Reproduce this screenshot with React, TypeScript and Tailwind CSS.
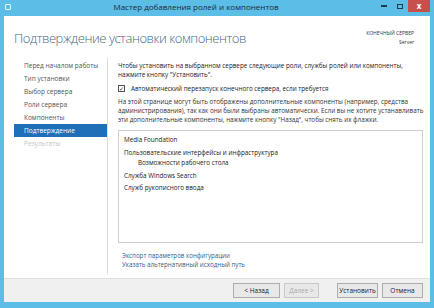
import React from "react";

const navItems = [
  { label: "Перед началом работы", state: "done" },
  { label: "Тип установки", state: "done" },
  { label: "Выбор сервера", state: "done" },
  { label: "Роли сервера", state: "done" },
  { label: "Компоненты", state: "done" },
  { label: "Подтверждение", state: "active" },
  { label: "Результаты", state: "disabled" },
];

function WinButton({ children, disabled }: { children: React.ReactNode; disabled?: boolean }) {
  return (
    <div
      className={
        "h-[15px] flex items-center justify-center border text-[6.5px] bg-[#e8e8e8] " +
        (disabled ? "border-[#c8c8c8] text-[#a8a8a8]" : "border-[#adadad] text-[#222]")
      }
    >
      {children}
    </div>
  );
}

export default function App() {
  return (
    <div
      className="w-[434px] h-[308px] bg-[#5cbde6] flex flex-col overflow-hidden"
      style={{ fontFamily: '"Open Sans", "Noto Sans", sans-serif' }}
    >
      {/* title bar */}
      <div className="h-[16px] flex items-start shrink-0">
        <div className="w-[16px] h-[13px] flex items-center justify-center">
          <div className="w-[6px] h-[6px] border border-[#e6f4fb] rounded-[1px]" />
        </div>
        <div className="flex-1 text-center text-[8px] leading-[14px] text-[#1a2b38]">
          Мастер добавления ролей и компонентов
        </div>
        <div className="flex mr-[4px]">
          <div className="w-[16px] h-[12px] flex items-center justify-center bg-[#5cbde6]">
            <div className="w-[6px] h-[2px] bg-[#1c3a52]" />
          </div>
          <div className="w-[16px] h-[12px] flex items-center justify-center">
            <div className="w-[6px] h-[5px] border-[1.5px] border-[#1c3a52]" />
          </div>
          <div className="w-[22px] h-[12px] flex items-center justify-center bg-[#c7504a] text-white text-[8px] font-bold leading-none">
            x
          </div>
        </div>
      </div>

      {/* client */}
      <div className="flex-1 mx-[4px] mb-[6px] bg-white flex flex-col">
        {/* header */}
        <div className="flex justify-between pt-[13px] pl-[10px] pr-[16px] h-[42px] shrink-0">
          <div className="text-[13px] font-light text-[#4a6682] leading-[18px] tracking-[-0.45px]">
            Подтверждение установки компонентов
          </div>
          <div className="text-right text-[5px] leading-[9px] text-[#333]">
            <div>КОНЕЧНЫЙ СЕРВЕР</div>
            <div>Server</div>
          </div>
        </div>

        {/* body */}
        <div className="flex flex-1">
          <div className="w-[104px] shrink-0 pl-[10px] pt-[1px] border-r border-[#dcdcdc] mb-[4px]">
            {navItems.map((it) => (
              <div
                key={it.label}
                className={
                  "h-[13px] pl-[10px] text-[6.5px] leading-[13px] " +
                  (it.state === "active"
                    ? "bg-[#1e6fb8] text-white"
                    : it.state === "disabled"
                    ? "text-[#c4c4c4]"
                    : "text-[#555]")
                }
              >
                {it.label}
              </div>
            ))}
          </div>

          <div className="flex-1 pl-[10px] pr-[10px] pt-[3px] text-[6.3px] text-[#222] flex flex-col">
            <div className="leading-[9px] whitespace-nowrap">
              Чтобы установить на выбранном сервере следующие роли, службы ролей или компоненты,
              <br />
              нажмите кнопку "Установить".
            </div>
            <div className="flex items-center gap-[6px] mt-[5px] leading-[9px]">
              <div className="w-[7px] h-[7px] border border-[#555] flex items-center justify-center text-[6px] leading-none">
                ✓
              </div>
              <span>Автоматический перезапуск конечного сервера, если требуется</span>
            </div>
            <div className="leading-[9px] mt-[4px] text-[#333] whitespace-nowrap">
              На этой странице могут быть отображены дополнительные компоненты (например, средства
              <br />
              администрирования), так как они были выбраны автоматически. Если вы не хотите устанавливать
              <br />
              эти дополнительные компоненты, нажмите кнопку "Назад", чтобы снять их флажки.
            </div>
            <div className="mt-[6px] h-[113px] border border-[#cfcfcf] px-[5px] pt-[3px] text-[6.3px] leading-[12.5px]">
              <div>Media Foundation</div>
              <div>Пользовательские интерфейсы и инфраструктура</div>
              <div className="pl-[14px] -mt-[2px]">Возможности рабочего стола</div>
              <div>Служба Windows Search</div>
              <div>Служб рукописного ввода</div>
            </div>
            <div className="mt-[8px] pl-[4px] text-[6.2px] leading-[9px] text-[#2c5f8c]">
              <div>Экспорт параметров конфигурации</div>
              <div>Указать альтернативный исходный путь</div>
            </div>
          </div>
        </div>

        {/* footer */}
        <div className="h-[24px] shrink-0 bg-[#f0f0f0] border-t border-[#dfdfdf] flex items-center justify-end pr-[7px]">
          <div className="w-[47px]">
            <WinButton>&lt; Назад</WinButton>
          </div>
          <div className="w-[35px] ml-[4px]">
            <WinButton disabled>Далее &gt;</WinButton>
          </div>
          <div className="w-[41px] ml-[18px]">
            <WinButton>Установить</WinButton>
          </div>
          <div className="w-[41px] ml-[4px]">
            <WinButton>Отмена</WinButton>
          </div>
        </div>
      </div>
    </div>
  );
}
